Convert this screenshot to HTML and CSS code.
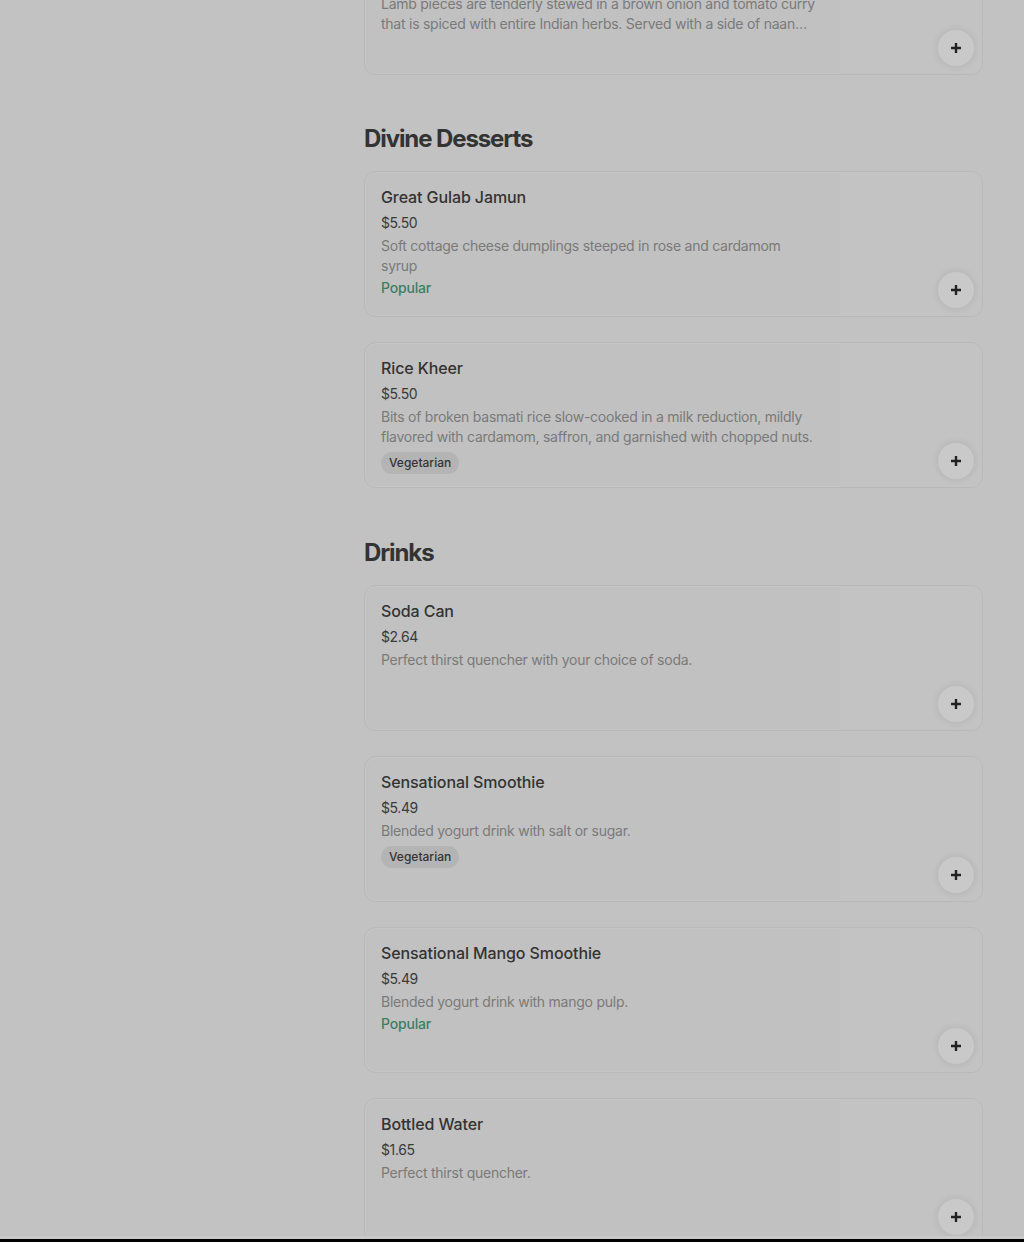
FILE: index.html
```html
<!DOCTYPE html>
<html lang="en">
<head>
<meta charset="utf-8">
<title>Menu</title>
<link rel="stylesheet" href="styles.css">
</head>
<body>
<main class="menu">
  <section class="section section-first">
    <article class="card card-cut">
      <div class="info">
        <h3 class="title">Lamb Rogan Josh</h3>
        <div class="price">$16.50</div>
        <p class="desc clamp">Lamb pieces are tenderly stewed in a brown onion and tomato curry that is spiced with entire Indian herbs. Served with a side of naan and rice.</p>
      </div>
      <div class="media"><button class="add" aria-label="Add"><svg viewBox="0 0 12 12" width="12" height="12"><path d="M6 1v10M1 6h10" stroke="#222" stroke-width="2.4" fill="none"/></svg></button></div>
    </article>
  </section>

  <section class="section">
    <h2 class="heading">Divine Desserts</h2>
    <article class="card">
      <div class="info">
        <h3 class="title">Great Gulab Jamun</h3>
        <div class="price">$5.50</div>
        <p class="desc">Soft cottage cheese dumplings steeped in rose and cardamom syrup</p>
        <div class="popular">Popular</div>
      </div>
      <div class="media"><button class="add" aria-label="Add"><svg viewBox="0 0 12 12" width="12" height="12"><path d="M6 1v10M1 6h10" stroke="#222" stroke-width="2.4" fill="none"/></svg></button></div>
    </article>
    <article class="card">
      <div class="info">
        <h3 class="title">Rice Kheer</h3>
        <div class="price">$5.50</div>
        <p class="desc">Bits of broken basmati rice slow-cooked in a milk reduction, mildly flavored with cardamom, saffron, and garnished with chopped nuts.</p>
        <span class="tag">Vegetarian</span>
      </div>
      <div class="media"><button class="add" aria-label="Add"><svg viewBox="0 0 12 12" width="12" height="12"><path d="M6 1v10M1 6h10" stroke="#222" stroke-width="2.4" fill="none"/></svg></button></div>
    </article>
  </section>

  <section class="section section-drinks">
    <h2 class="heading">Drinks</h2>
    <article class="card">
      <div class="info">
        <h3 class="title">Soda Can</h3>
        <div class="price">$2.64</div>
        <p class="desc">Perfect thirst quencher with your choice of soda.</p>
      </div>
      <div class="media"><button class="add" aria-label="Add"><svg viewBox="0 0 12 12" width="12" height="12"><path d="M6 1v10M1 6h10" stroke="#222" stroke-width="2.4" fill="none"/></svg></button></div>
    </article>
    <article class="card">
      <div class="info">
        <h3 class="title">Sensational Smoothie</h3>
        <div class="price">$5.49</div>
        <p class="desc">Blended yogurt drink with salt or sugar.</p>
        <span class="tag">Vegetarian</span>
      </div>
      <div class="media"><button class="add" aria-label="Add"><svg viewBox="0 0 12 12" width="12" height="12"><path d="M6 1v10M1 6h10" stroke="#222" stroke-width="2.4" fill="none"/></svg></button></div>
    </article>
    <article class="card">
      <div class="info">
        <h3 class="title">Sensational Mango Smoothie</h3>
        <div class="price">$5.49</div>
        <p class="desc">Blended yogurt drink with mango pulp.</p>
        <div class="popular">Popular</div>
      </div>
      <div class="media"><button class="add" aria-label="Add"><svg viewBox="0 0 12 12" width="12" height="12"><path d="M6 1v10M1 6h10" stroke="#222" stroke-width="2.4" fill="none"/></svg></button></div>
    </article>
    <article class="card">
      <div class="info">
        <h3 class="title">Bottled Water</h3>
        <div class="price">$1.65</div>
        <p class="desc">Perfect thirst quencher.</p>
      </div>
      <div class="media"><button class="add" aria-label="Add"><svg viewBox="0 0 12 12" width="12" height="12"><path d="M6 1v10M1 6h10" stroke="#222" stroke-width="2.4" fill="none"/></svg></button></div>
    </article>
  </section>
</main>
<div class="bottom-bar"></div>
</body>
</html>
```

FILE: styles.css
```css
* { box-sizing: border-box; }

html, body {
  margin: 0;
  padding: 0;
  background: #c2c2c2;
  height: 100%;
  overflow: hidden;
}

body {
  font-family: Inter, "Noto Sans", "Liberation Sans", sans-serif;
  color: #333;
}

.menu {
  width: 619px;
  margin-left: 364px;
  display: flex;
  flex-direction: column;
  gap: 48px;
}

.section {
  display: flex;
  flex-direction: column;
  gap: 25px;
}

.section-first {
  margin-top: -71px;
}

.section-drinks {
  margin-top: 1px;
}

.heading {
  margin: 0 0 -9px 0;
  font-size: 24px;
  line-height: 32px;
  font-weight: 700;
  letter-spacing: -1.1px;
  color: #333;
}

.card {
  height: 146px;
  display: flex;
  border: 1px solid #b9b9b9;
  border-radius: 12px;
  background: #c1c1c1;
  box-shadow: inset 0 0 0 1px #c6c6c6;
  overflow: hidden;
}

.info {
  flex: 1;
  padding: 14px 16px 0 16px;
  display: flex;
  flex-direction: column;
  align-items: flex-start;
  min-width: 0;
}

.title {
  margin: 0;
  font-size: 16px;
  line-height: 22px;
  font-weight: 500;
  color: #333;
  letter-spacing: -0.1px;
}

.price {
  margin-top: 5px;
  font-size: 14px;
  line-height: 20px;
  color: #3a3a3a;
  letter-spacing: -0.4px;
}

.desc {
  margin: 3px 0 0 0;
  width: 436px;
  font-size: 14px;
  line-height: 20px;
  color: #7a7a7a;
  letter-spacing: -0.25px;
}

.clamp {
  display: -webkit-box;
  -webkit-line-clamp: 2;
  -webkit-box-orient: vertical;
  overflow: hidden;
}

.popular {
  margin-top: 2px;
  font-size: 14px;
  line-height: 20px;
  font-weight: 500;
  color: #3e7f5d;
  letter-spacing: -0.2px;
}

.tag {
  margin-top: 5px;
  height: 22px;
  padding: 0 8px;
  border-radius: 11px;
  background: #b4b4b4;
  font-size: 12px;
  line-height: 22px;
  color: #333;
  font-weight: 500;
}

.media {
  width: 142px;
  background: #c3c3c3;
  display: flex;
  align-items: flex-end;
  justify-content: flex-end;
  padding: 0 8px 8px 0;
}

.add {
  width: 36px;
  height: 36px;
  border-radius: 50%;
  border: none;
  padding: 0;
  background: #c9c9c9;
  box-shadow: 0 0 6px 2px rgba(0, 0, 0, 0.06);
  display: flex;
  align-items: center;
  justify-content: center;
  cursor: pointer;
}

.add svg { display: block; }

.bottom-bar {
  position: fixed;
  left: 0;
  right: 0;
  bottom: 0;
  height: 3px;
  background: #000;
  box-shadow: 0 -3px 0 #c8c8c8;
}
```
